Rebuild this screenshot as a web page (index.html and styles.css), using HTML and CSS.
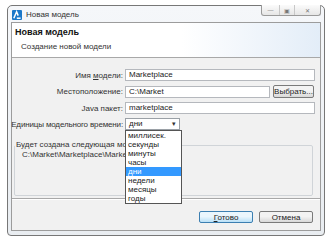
FILE: index.html
```html
<!DOCTYPE html>
<html lang="ru">
<head>
  <meta charset="UTF-8">
  <title>Новая модель</title>
  <link rel="stylesheet" href="styles.css">
</head>
<body>

  <div class="window">
    <div class="titlebar">
      <svg class="app-icon" width="10" height="10" viewBox="0 0 10 10">
        <rect width="10" height="10" rx="1" fill="#1b78c9"/>
        <path d="M1.8 8.2 L4.6 1.8 L6.2 5.6" stroke="#fff" stroke-width="1.5" fill="none"/>
        <path d="M4.8 8.2 H8.6" stroke="#fff" stroke-width="1.5"/>
      </svg>
      <span class="title">Новая модель</span>
      <div class="controls">
        <span class="ctl ctl-min">&#8212;</span>
        <span class="ctl ctl-max">&#9635;</span>
        <span class="ctl ctl-close">&#10005;</span>
      </div>
    </div>

    <div class="client">
      <div class="header">
        <div class="header-title">Новая модель</div>
        <div class="header-sub">Создание новой модели</div>
      </div>

      <div class="form">
        <label>Имя <u>м</u>одели:</label>
        <div class="field">Marketplace</div>

        <label>Местоположение:</label>
        <div class="field-row">
          <div class="field">C:\Market</div>
          <button class="btn btn-small">Выбрать...</button>
        </div>

        <label>Java пакет:</label>
        <div class="field">marketplace</div>

        <label class="label-long">Единицы модельного времени:</label>
        <div class="combo">
          <span>дни</span>
          <span class="arrow">&#9662;</span>
          <ul class="dropdown">
            <li>миллисек.</li>
            <li>секунды</li>
            <li>минуты</li>
            <li>часы</li>
            <li class="selected">дни</li>
            <li>недели</li>
            <li>месяцы</li>
            <li>годы</li>
          </ul>
        </div>
      </div>

      <fieldset class="group">
        <legend>Будет создана следующая модель:</legend>
        <div class="path">C:\Market\Marketplace\Marketplace.alp</div>
      </fieldset>

      <div class="separator"></div>

      <div class="buttons">
        <button class="btn btn-default"><u>Г</u>отово</button>
        <button class="btn">Отмена</button>
      </div>
    </div>
  </div>

</body>
</html>
```

FILE: styles.css
```css
body {
  margin: 0;
  width: 326px;
  height: 240px;
  background: #fff;
  font-family: 'Liberation Sans', Arial, sans-serif;
  font-size: 8px;
  color: #222;
  overflow: hidden;
}

.window {
  box-sizing: border-box;
  width: 318px;
  height: 231px;
  margin: 5px 0 0 7px;
  padding: 0 3px 4px 3px;
  border: 1px solid #777;
  border-radius: 5px 5px 4px 4px;
  background: linear-gradient(#f5f7fa, #e9edf1);
  display: flex;
  flex-direction: column;
}

.titlebar {
  height: 16px;
  display: flex;
  align-items: center;
}

.app-icon {
  margin-left: 1px;
  margin-top: 1px;
}

.title {
  margin-left: 4px;
  font-size: 8px;
  color: #333;
}

.controls {
  margin-left: auto;
  margin-top: -1px;
  align-self: flex-start;
  display: flex;
  height: 10px;
  border: 1px solid #9a9a9a;
  border-top: none;
  border-radius: 0 0 3px 3px;
  background: linear-gradient(#fbfbfb, #e6e6e6);
}

.ctl {
  display: flex;
  align-items: center;
  justify-content: center;
  font-size: 6px;
  color: #777;
  border-left: 1px solid #c8c8c8;
}

.ctl-min {
  width: 17px;
  border-left: none;
}

.ctl-max {
  width: 14px;
}

.ctl-close {
  width: 25px;
}

.client {
  flex: 1;
  border: 1px solid #9c9c9c;
  background: #f1f1f1;
  display: flex;
  flex-direction: column;
}

.header {
  height: 30px;
  padding: 4px 0 0 3px;
  background: linear-gradient(to right, #fff 55%, #e3edf8);
  border-bottom: 1px solid #a8a8a8;
}

.header-title {
  font-size: 9px;
  font-weight: bold;
  line-height: 11px;
  color: #111;
}

.header-sub {
  margin-top: 3px;
  padding-left: 6px;
  line-height: 11px;
  color: #333;
}

.form {
  display: grid;
  grid-template-columns: 111px 1fr;
  grid-template-rows: 12px 13px 12px 12px;
  column-gap: 2px;
  row-gap: 4px;
  padding: 11px 5px 0 0;
  align-items: center;
}

.form label {
  justify-self: end;
  white-space: nowrap;
  color: #333;
}

.label-long {
  letter-spacing: -0.15px;
}

.field {
  box-sizing: border-box;
  height: 12px;
  line-height: 10px;
  padding: 0 3px;
  background: #fff;
  border: 1px solid #b5b8bd;
}

.field-row {
  display: flex;
  gap: 3px;
  align-items: center;
  padding-right: 1px;
}

.field-row .field {
  flex: 1;
}

.btn {
  box-sizing: border-box;
  height: 12px;
  padding: 0;
  font-family: inherit;
  font-size: 8px;
  color: #222;
  border: 1px solid #7a7a7a;
  border-radius: 2px;
  background: linear-gradient(#f3f3f3 45%, #d8d8d8);
}

.btn-small {
  width: 41px;
  height: 13px;
}

.combo {
  position: relative;
  box-sizing: border-box;
  width: 55px;
  height: 12px;
  padding: 0 3px;
  line-height: 10px;
  background: #fff;
  border: 1px solid #9aa0a6;
  display: flex;
  justify-content: space-between;
}

.arrow {
  font-size: 7px;
  color: #333;
}

.dropdown {
  position: absolute;
  top: 11px;
  left: -1px;
  width: 55px;
  margin: 0;
  padding: 0;
  list-style: none;
  background: #fff;
  border: 1px solid #555;
}

.dropdown li {
  height: 9px;
  line-height: 9px;
  padding-left: 2px;
}

.dropdown .selected {
  background: #3399ff;
  color: #fff;
}

.group {
  box-sizing: border-box;
  height: 56px;
  margin: 10px 7px 0 2px;
  padding: 0;
  border: 1px solid #d0d4d8;
  border-radius: 2px;
}

.group legend {
  padding: 0 1px;
  line-height: 10px;
  color: #333;
}

.path {
  padding-left: 7px;
  line-height: 9px;
  color: #333;
}

.separator {
  margin-top: 2px;
  border-top: 1px solid #a8a8a8;
  border-bottom: 1px solid #fff;
}

.buttons {
  display: flex;
  justify-content: flex-end;
  gap: 6px;
  padding: 11px 7px 0 0;
}

.buttons .btn {
  width: 54px;
}

.btn-default {
  border-color: #3c7fb1;
  background: linear-gradient(#eaf6fd 45%, #b9e0f7);
}
```
